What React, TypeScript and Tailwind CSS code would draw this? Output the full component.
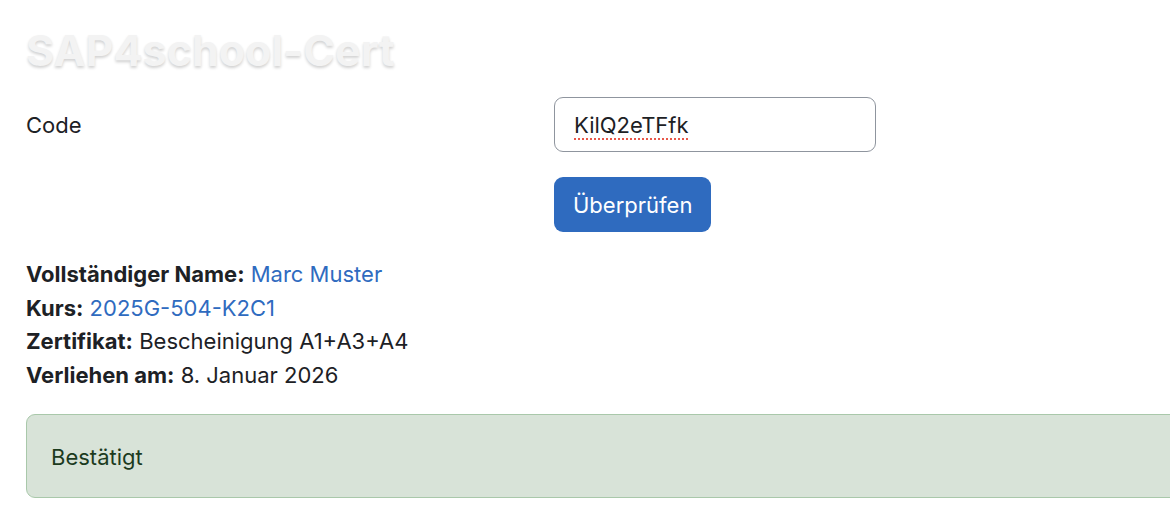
import React from 'react'

const rows = [
  { label: 'Vollständiger Name:', value: 'Marc Muster', link: true },
  { label: 'Kurs:', value: '2025G-504-K2C1', link: true },
  { label: 'Zertifikat:', value: 'Bescheinigung A1+A3+A4', link: false },
  { label: 'Verliehen am:', value: '8. Januar 2026', link: false },
]

export default function App() {
  return (
    <div
      className="min-h-[514px] overflow-hidden bg-white pl-[26px] text-[22px] text-[#1d2125]"
      style={{ fontFamily: 'Inter, "Noto Sans", sans-serif' }}
    >
      {/* Titel */}
      <h1 className="pt-[24px] text-[43px] font-bold leading-[52px] text-[#f3f3f3] [text-shadow:0_2px_3px_rgba(0,0,0,0.18)]">
        SAP4school-Cert
      </h1>

      {/* Formular */}
      <div className="mt-[21px] flex">
        <label className="flex h-[55px] w-[528px] items-center pt-[2px]">Code</label>
        <div className="flex h-[55px] w-[322px] items-center rounded-[9px] border border-[#8f959e] px-[19px] pt-[2px]">
          <span className="underline decoration-[#e8584a] decoration-dotted decoration-2 underline-offset-[5px]">
            KilQ2eTFfk
          </span>
        </div>
      </div>
      <div className="mt-[25px] pl-[528px]">
        <button
          type="button"
          className="h-[55px] rounded-[9px] bg-[#2f6bbf] px-[19px] pt-[2px] text-white"
        >
          Überprüfen
        </button>
      </div>

      {/* Angaben */}
      <div className="mt-[26px] leading-[33.7px]">
        {rows.map(r => (
          <div key={r.label}>
            <span className="font-bold">{r.label}</span>{' '}
            <span className={r.link ? 'text-[#2f6bbf]' : ''}>{r.value}</span>
          </div>
        ))}
      </div>

      {/* Meldung */}
      <div className="-mr-[20px] mt-[21px] flex h-[84px] items-center rounded-l-[9px] border border-[#a9c8aa] bg-[#d8e3d8] pl-[24px] pt-[3px] text-[#1c3b1e]">
        Bestätigt
      </div>
    </div>
  )
}
